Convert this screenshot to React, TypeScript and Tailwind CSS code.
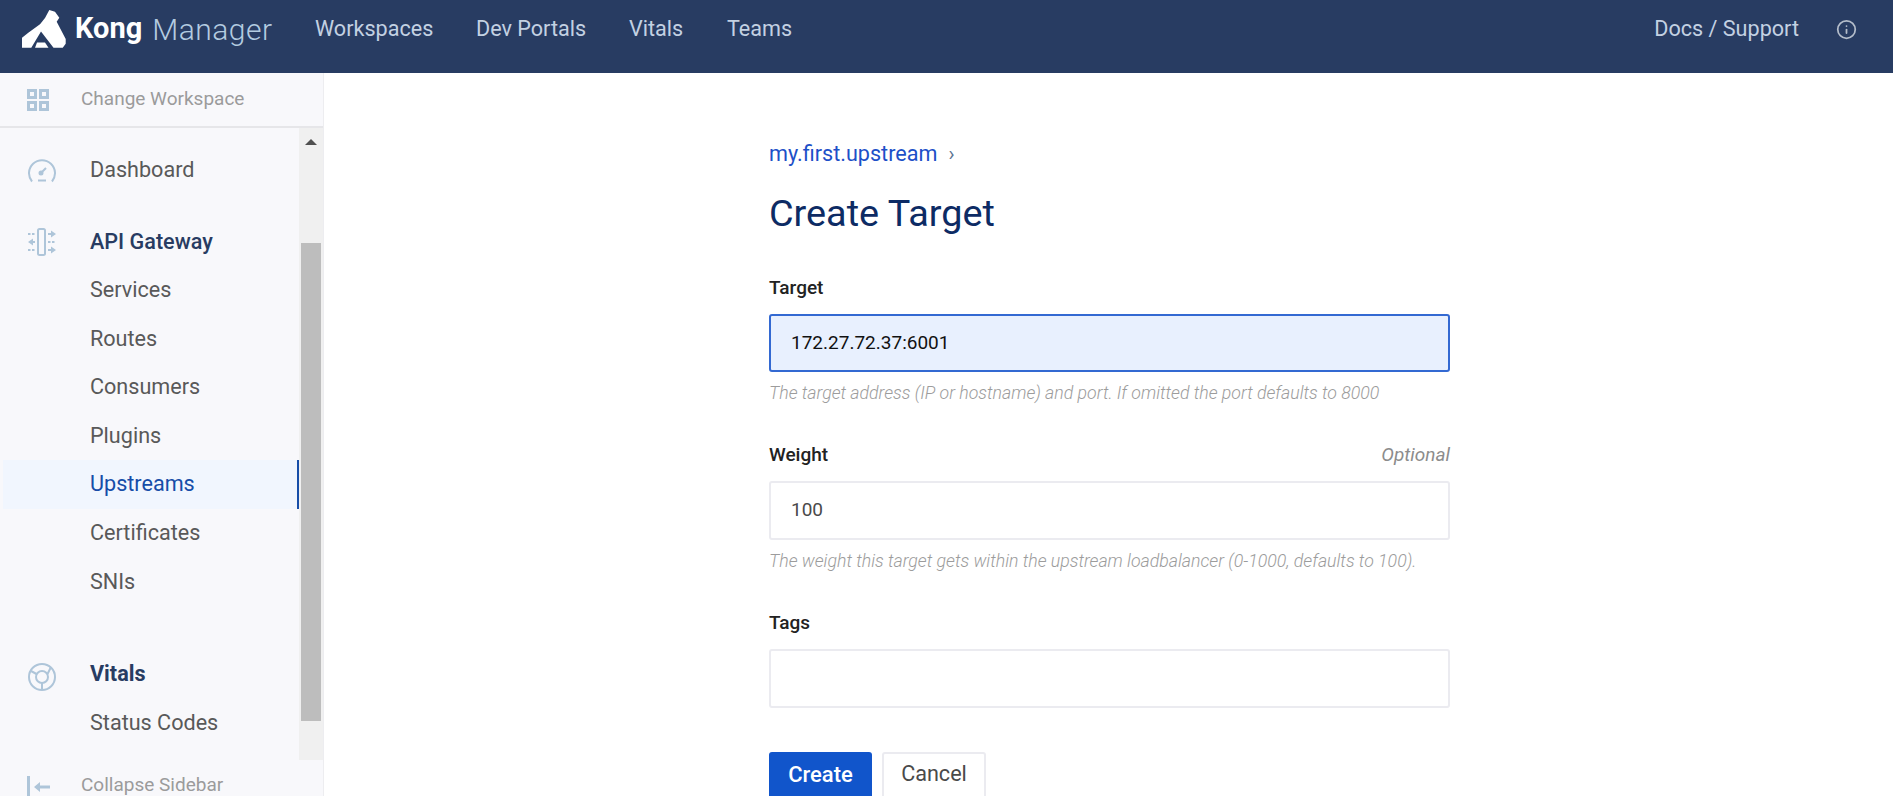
import { Info } from 'lucide-react'

const GATEWAY_ITEMS = ['Services', 'Routes', 'Consumers', 'Plugins', 'Upstreams', 'Certificates', 'SNIs']
const NAV_LINKS = [
  { label: 'Workspaces', cls: 'w-[161px]' },
  { label: 'Dev Portals', cls: 'w-[153px]' },
  { label: 'Vitals', cls: 'w-[98px]' },
  { label: 'Teams', cls: 'w-[90px]' },
]

function KongLogo() {
  return (
    <svg width="44" height="38" viewBox="0 0 44 38" fill="#fff" className="shrink-0">
      <path d="M27.3 0L33 1.700L37.300 7.700L34.700 11.700L43.700 29V33.700L40.700 37.700H31.500L19 21.500L9.300 37.700H0V27.700L6.300 22.700L18 14.300L23 8Z" />
      <path d="M15 32.500H23L26.500 37.700H13Z" />
    </svg>
  )
}

function WorkspaceIcon() {
  return (
    <svg width="22" height="22" viewBox="0 0 22 22" fill="none" stroke="#aec5d9" strokeWidth="3">
      <rect x="1.500" y="1.500" width="7" height="7" />
      <rect x="13.500" y="1.500" width="7" height="7" />
      <rect x="1.500" y="13.500" width="7" height="7" />
      <rect x="13.500" y="13.500" width="7" height="7" />
    </svg>
  )
}

function GaugeIcon() {
  return (
    <svg width="28" height="26" viewBox="0 0 28 26" fill="none" stroke="#aec5d9" strokeWidth="2">
      <path d="M4 24.500A13 13 0 1 1 24 24.500" />
      <path d="M10 23.500h8" />
      <path d="M12 17l6-6" />
      <circle cx="13" cy="16" r="1.500" fill="#aec5d9" />
    </svg>
  )
}

function GatewayIcon() {
  return (
    <svg width="28" height="28" viewBox="0 0 28 28" fill="none" stroke="#aec5d9" strokeWidth="2">
      <rect x="10" y="1" width="7" height="26" rx="1.500" />
      <path d="M0 6h7M0 22h7M20 14h7" strokeDasharray="2.500 1.500" />
      <path d="M20 6h4M20 22h4M3 14h4" />
      <path d="M23 2.500l5 3.500-5 3.500M5 10.500l-5 3.500 5 3.500M23 18.500l5 3.500-5 3.500" fill="#aec5d9" stroke="none" />
    </svg>
  )
}

function VitalsIcon() {
  return (
    <svg width="28" height="28" viewBox="0 0 28 28" fill="none" stroke="#aec5d9" strokeWidth="2">
      <circle cx="14" cy="14" r="13" />
      <circle cx="14" cy="14" r="6" />
      <path d="M14 20v7M8.500 11L3 8M19.500 11L23 4" />
    </svg>
  )
}

function CollapseIcon() {
  return (
    <svg width="23" height="20" viewBox="0 0 23 20" fill="#aec5d9" className="shrink-0">
      <rect x="0" y="0" width="3" height="20" />
      <path d="M7 11l6-5v3.500h10v3H13V16z" />
    </svg>
  )
}

function Field({ label, optional, value, help, focused }: { label: string; optional?: boolean; value: string; help?: string; focused?: boolean }) {
  return (
    <div>
      <div className="flex items-center justify-between h-[24px] text-[19px] leading-[24px]">
        <span className="font-medium text-[#222]">{label}</span>
        {optional && <span className="italic text-[#8c8c8c]">Optional</span>}
      </div>
      <div
        className={
          focused
            ? 'mt-[14px] h-[58px] rounded-[3px] border-2 border-[#3369d2] bg-[#e8f0fe] pl-[20px] flex items-center text-[19px] text-[#111]'
            : 'mt-[14px] h-[59px] rounded-[3px] border-2 border-[#ebebf0] bg-white pl-[20px] flex items-center text-[19px] text-[#4a4a4a]'
        }
      >
        {value}
      </div>
      {help && <p className="mt-[9px] h-[24px] text-[17.7px] leading-[24px] italic font-light text-[#9c9c9c]">{help}</p>}
    </div>
  )
}

export default function App() {
  return (
    <div className="h-[796px] w-[1893px] overflow-hidden flex flex-col bg-white font-['Roboto',sans-serif]">

      {/* Header */}
      <header className="h-[73px] shrink-0 bg-[#283c62] flex items-start">
        <div className="flex items-center h-[58px] pl-[22px] w-[315px]">
          <KongLogo />
          <span className="ml-[9px] text-[29px] font-bold text-white">Kong</span>
          <span className="ml-[10px] text-[30px] font-light tracking-[0.5px] text-[#b3cbe0]">Manager</span>
        </div>
        {NAV_LINKS.map(link => (
          <span key={link.label} className={`${link.cls} h-[58px] flex items-center text-[21.6px] text-[#c3d1e2]`}>{link.label}</span>
        ))}
        <div className="ml-auto h-[58px] flex items-center pr-[36px]">
          <span className="text-[21.6px] text-[#c3d1e2]">Docs / Support</span>
          <Info size={21} className="ml-[37px] text-[#b4bdca]" />
        </div>
      </header>

      <div className="flex flex-1 min-h-0">

        {/* Sidebar */}
        <aside className="w-[324px] shrink-0 bg-[#f8f8fb] border-r border-[#ededf0] flex flex-col">
          <div className="h-[55px] shrink-0 border-b-2 border-[#e6e6e9] flex items-center pl-[27px] text-[19px] text-[#9b9b9b]">
            <WorkspaceIcon />
            <span className="ml-[32px]">Change Workspace</span>
          </div>

          <div className="flex flex-1 min-h-0">
            <nav className="flex-1 min-w-0 text-[21.6px] text-[#595959]">
              <div className="h-[70px] pt-[14px] flex items-center">
                <div className="w-[90px] pl-[28px]"><GaugeIcon /></div>
                <span>Dashboard</span>
              </div>
              <div className="mt-[16px] h-[52px] pt-[4px] flex items-center">
                <div className="w-[90px] pl-[28px]"><GatewayIcon /></div>
                <span className="font-medium text-[#283c62]">API Gateway</span>
              </div>
              {GATEWAY_ITEMS.map(item =>
                item === 'Upstreams' ? (
                  <div key={item} className="ml-[3px] h-[48.6px] pl-[87px] flex items-center bg-[#f1f6fe] border-r-2 border-[#164da8] text-[#164da8]">{item}</div>
                ) : (
                  <div key={item} className="h-[48.6px] pl-[90px] flex items-center">{item}</div>
                )
              )}
              <div className="h-[43px]" />
              <div className="h-[50px] flex items-center">
                <div className="w-[90px] pl-[28px] pt-[6px]"><VitalsIcon /></div>
                <span className="font-bold text-[#283c62]">Vitals</span>
              </div>
              <div className="h-[48.6px] pl-[90px] flex items-center">Status Codes</div>
            </nav>

            {/* Scrollbar */}
            <div className="w-[24px] shrink-0 bg-[#f0f0f0] px-[2px]">
              <div className="h-[115px] pt-[11px] flex justify-center items-start">
                <div className="w-0 h-0 border-x-[6px] border-x-transparent border-b-[6px] border-b-[#505050]" />
              </div>
              <div className="h-[478px] bg-[#bdbdbd]" />
            </div>
          </div>

          <div className="h-[36px] shrink-0 flex items-start pl-[27px] pt-[16px] text-[19px] text-[#9b9b9b]">
            <CollapseIcon />
            <span className="ml-[31px] -mt-[5px]">Collapse Sidebar</span>
          </div>
        </aside>

        {/* Form */}
        <main className="flex-1 min-w-0 pl-[445px]">
          <div className="w-[681px] pt-[67px]">
            <div className="h-[28px] flex items-center text-[21.6px] text-[#1d50c8]">
              my.first.upstream
              <span className="ml-[11px] text-[#5d7390] text-[20px]">›</span>
            </div>
            <h1 className="mt-[21px] h-[48px] flex items-center text-[37.8px] text-[#0d2b64]">Create Target</h1>
            <div className="mt-[39px]">
              <Field label="Target" value="172.27.72.37:6001" focused help="The target address (IP or hostname) and port. If omitted the port defaults to 8000" />
            </div>
            <div className="mt-[38px]">
              <Field label="Weight" optional value="100" help="The weight this target gets within the upstream loadbalancer (0-1000, defaults to 100)." />
            </div>
            <div className="mt-[38px]">
              <Field label="Tags" value="" />
            </div>
            <div className="mt-[44px] flex gap-[10px]">
              <button className="w-[103px] h-[56px] pb-[12px] rounded-[3px] bg-[#1155cb] text-white text-[22px] font-medium">Create</button>
              <button className="w-[104px] h-[56px] pb-[12px] rounded-[3px] border-2 border-[#ebebf0] bg-white text-[#4a4a4a] text-[21.6px]">Cancel</button>
            </div>
          </div>
        </main>
      </div>
    </div>
  )
}
